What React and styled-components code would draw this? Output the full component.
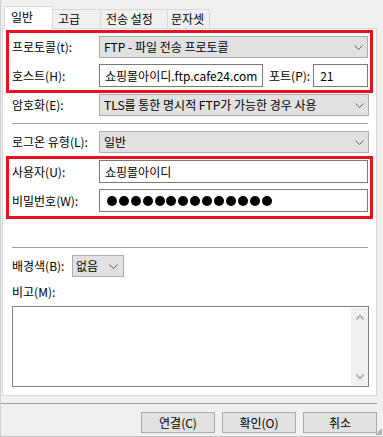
import React from 'react';
import styled, { createGlobalStyle } from 'styled-components';

const Global = createGlobalStyle`
  html, body { margin: 0; padding: 0; background: #f0f0f0; }
  body {
    font-family: "Noto Sans CJK KR", "Noto Sans", sans-serif;
    font-size: 12px;
    color: #000;
  }
  * { box-sizing: border-box; }
`;

const Window = styled.div`
  position: relative;
  width: 383px;
  height: 437px;
  border-left: 1px solid #d0d0d0;
  border-bottom: 1px solid #c4c4c4;
  background: #f0f0f0;
  display: flex;
  flex-direction: column;
  overflow: hidden;
`;

const TabBar = styled.div`
  position: relative;
  z-index: 1;
  display: flex;
  align-items: flex-end;
  height: 28px;
  padding-left: 3px;
`;

const Tab = styled.div`
  width: ${p => p.$w}px;
  height: ${p => (p.$active ? 23 : 19)}px;
  margin-bottom: ${p => (p.$active ? -1 : 0)}px;
  padding-left: ${p => p.$pad}px;
  border-top: 1px solid #d9d9d9;
  border-right: 1px solid #d9d9d9;
  border-left: ${p => (p.$active ? '1px solid #d9d9d9' : 'none')};
  background: ${p => (p.$active ? '#fff' : '#f0f0f0')};
  display: flex;
  align-items: center;
  line-height: 1;
  white-space: nowrap;
  padding-bottom: ${p => (p.$active ? 2 : 0)}px;
`;

const Panel = styled.div`
  margin-left: 1px;
  width: 375px;
  height: 368px;
  background: #fff;
  border: 1px solid #d9d9d9;
  display: flex;
  flex-direction: column;
`;

const RedBox = styled.div`
  margin: ${p => p.$mt}px 3px 0;
  height: 63px;
  border: 3px solid #e8121d;
  padding: ${p => p.$pt}px 2px 0 3px;
  display: flex;
  flex-direction: column;
  gap: 6px;
`;

const Row = styled.div`
  display: grid;
  grid-template-columns: 87px 1fr;
  align-items: center;
  height: ${p => p.$h || 22}px;
  margin-top: ${p => p.$mt || 0}px;
  padding: ${p => (p.$outer ? '0 7px 0 9px' : '0')};
`;

const Label = styled.span`
  line-height: 16px;
  white-space: nowrap;
`;

const SelectBox = styled.div`
  height: 22px;
  width: ${p => (p.$w ? `${p.$w}px` : 'auto')};
  border: 1px solid #adadad;
  background: #e1e1e1;
  display: flex;
  align-items: center;
  justify-content: space-between;
  padding: 0 ${p => p.$pr ?? 4}px 0 ${p => p.$pl ?? 4}px;
  line-height: 16px;
  white-space: nowrap;
`;

const InputBox = styled.div`
  height: ${p => p.$h || 23}px;
  width: ${p => (p.$w ? `${p.$w}px` : 'auto')};
  flex: ${p => (p.$w ? 'none' : '1')};
  border: 1px solid #7a7a7a;
  background: #fff;
  display: flex;
  align-items: center;
  padding-left: ${p => p.$pl ?? 5}px;
  overflow: hidden;
  white-space: nowrap;
  line-height: 16px;
`;

const HostLine = styled.div`
  display: flex;
  align-items: center;
`;

const PortLabel = styled.span`
  margin-left: 6px;
  margin-right: 3px;
  line-height: 16px;
  white-space: nowrap;
`;

const Dots = styled.div`
  display: flex;
  gap: 1.9px;
  padding-left: 2px;
`;

const Dot = styled.span`
  width: 10px;
  height: 10px;
  border-radius: 50%;
  background: #000;
`;

const Separator = styled.div`
  height: 1px;
  margin: ${p => p.$mt}px 8px 0 9px;
  background: #a0a0a0;
`;

const BgRow = styled.div`
  display: flex;
  align-items: center;
  margin-top: 7px;
  padding-left: 9px;
  height: 22px;
`;

const BgLabel = styled.span`
  width: 60px;
  line-height: 16px;
`;

const MemoLabel = styled.div`
  margin-top: 7px;
  padding-left: 9px;
  height: 16px;
  line-height: 16px;
`;

const MemoArea = styled.div`
  margin: 6px 7px 0 9px;
  height: 81px;
  border: 1px solid #828282;
  background: #fff;
  display: flex;
  justify-content: flex-end;
`;

const ScrollBar = styled.div`
  width: 17px;
  margin: 1px 0;
  background: #f0f0f0;
  display: flex;
  flex-direction: column;
  justify-content: space-between;
  align-items: center;
  padding: 7px 0 6px;
`;

const Footer = styled.div`
  margin-top: 7px;
  width: 376px;
  border-top: 1px solid #a0a0a0;
  padding-top: 8px;
  display: flex;
  justify-content: flex-end;
  gap: 7px;
`;

const Button = styled.div`
  width: 74px;
  height: 21px;
  border: 1px solid #adadad;
  background: #e1e1e1;
  display: flex;
  align-items: center;
  justify-content: center;
  line-height: 16px;
`;

const Grip = styled.svg`
  position: absolute;
  right: 1px;
  bottom: 1px;
`;

const Chevron = ({ dir = 'down', color = '#606060', w = 9, h = 5, sw = 1 }) => (
  <svg width={w} height={h} viewBox={`0 0 ${w} ${h}`}>
    <polyline
      points={dir === 'down'
        ? `0.5,0.5 ${w / 2},${h - 0.5} ${w - 0.5},0.5`
        : `0.5,${h - 0.5} ${w / 2},0.5 ${w - 0.5},${h - 0.5}`}
      fill="none"
      stroke={color}
      strokeWidth={sw}
    />
  </svg>
);

const Select = ({ children, w, pl, pr }) => (
  <SelectBox $w={w} $pl={pl} $pr={pr}>
    <span>{children}</span>
    <Chevron />
  </SelectBox>
);

export default function App() {
  return (
    <>
      <Global />
      <Window>
        <TabBar>
          <Tab $active $w={49} $pad={6}>일반</Tab>
          <Tab $w={48} $pad={5}>고급</Tab>
          <Tab $w={67} $pad={5}>전송 설정</Tab>
          <Tab $w={42} $pad={3}>문자셋</Tab>
        </TabBar>
        <Panel>
          <RedBox $mt={1} $pt={3}>
            <Row>
              <Label>프로토콜(t):</Label>
              <Select>FTP - 파일 전송 프로토콜</Select>
            </Row>
            <Row $h={23}>
              <Label>호스트(H):</Label>
              <HostLine>
                <InputBox $w={164}>쇼핑몰아이디.ftp.cafe24.com</InputBox>
                <PortLabel>포트(P):</PortLabel>
                <InputBox $pl={6}>21</InputBox>
              </HostLine>
            </Row>
          </RedBox>
          <Row $outer $mt={1}>
            <Label>암호화(E):</Label>
            <Select>TLS를 통한 명시적 FTP가 가능한 경우 사용</Select>
          </Row>
          <Separator $mt={7} />
          <Row $outer $mt={7}>
            <Label>로그온 유형(L):</Label>
            <Select>일반</Select>
          </Row>
          <RedBox $mt={3} $pt={1}>
            <Row $h={23}>
              <Label>사용자(U):</Label>
              <InputBox>쇼핑몰아이디</InputBox>
            </Row>
            <Row $h={23}>
              <Label>비밀번호(W):</Label>
              <InputBox>
                <Dots>
                  {Array.from({ length: 14 }).map((_, i) => <Dot key={i} />)}
                </Dots>
              </InputBox>
            </Row>
          </RedBox>
          <Separator $mt={28} />
          <BgRow>
            <BgLabel>배경색(B):</BgLabel>
            <Select w={52} pl={3} pr={5}>없음</Select>
          </BgRow>
          <MemoLabel>비고(M):</MemoLabel>
          <MemoArea>
            <ScrollBar>
              <Chevron dir="up" color="#a6a6a6" w={8} h={5} sw={1.6} />
              <Chevron dir="down" color="#a6a6a6" w={8} h={5} sw={1.6} />
            </ScrollBar>
          </MemoArea>
        </Panel>
        <Footer>
          <Button>연결(C)</Button>
          <Button>확인(O)</Button>
          <Button>취소</Button>
        </Footer>
        <Grip width="6" height="6" viewBox="0 0 6 6">
          <rect x="4" y="0" width="2" height="2" fill="#b5b5b5" />
          <rect x="2" y="2" width="2" height="2" fill="#b5b5b5" />
          <rect x="4" y="2" width="2" height="2" fill="#b5b5b5" />
          <rect x="0" y="4" width="2" height="2" fill="#b5b5b5" />
          <rect x="2" y="4" width="2" height="2" fill="#b5b5b5" />
          <rect x="4" y="4" width="2" height="2" fill="#b5b5b5" />
        </Grip>
      </Window>
    </>
  );
}
